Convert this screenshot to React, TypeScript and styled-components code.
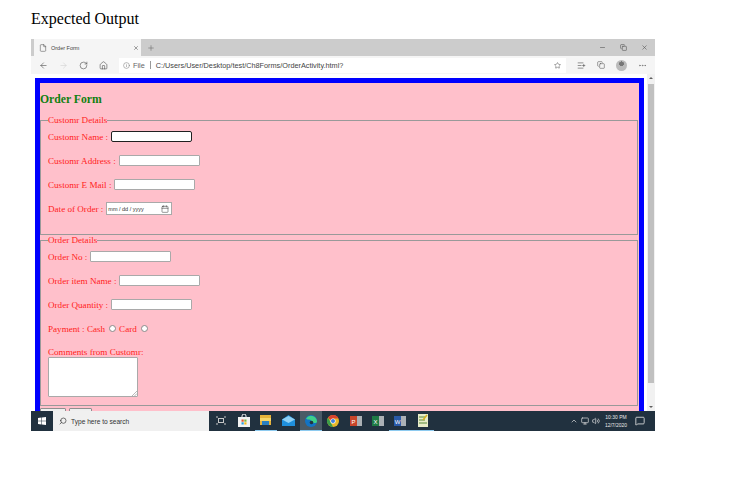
import React from 'react';
import styled, { createGlobalStyle } from 'styled-components';
import {
  ArrowLeft,
  ArrowRight,
  RotateCw,
  Home,
  Info,
  Star,
  ListPlus,
  Copy,
  MoreHorizontal,
  Minus,
  X,
  Plus,
  File,
  Search,
  Calendar,
  ChevronUp,
  MessageSquare,
  Monitor,
  Volume2,
} from 'lucide-react';

const GlobalStyle = createGlobalStyle`
  html, body {
    margin: 0;
    padding: 0;
    background: #ffffff;
  }
  body {
    width: 731px;
    height: 486px;
    overflow: hidden;
    font-family: "Liberation Serif", "Times New Roman", serif;
  }
`;

const Page = styled.div`
  padding: 9px 0 0 31px;
`;

const PageTitle = styled.div`
  height: 30px;
  line-height: 19px;
  font-size: 16px;
  color: #000000;
`;

const Shot = styled.div`
  width: 624px;
  height: 392px;
  display: flex;
  flex-direction: column;
  overflow: hidden;
  font-family: "Liberation Sans", Arial, sans-serif;
`;

const TabBar = styled.div`
  height: 17px;
  flex: none;
  display: flex;
  align-items: stretch;
  background: #cccccc;
`;

const Tab = styled.div`
  width: 107px;
  margin-left: 3px;
  display: flex;
  align-items: center;
  padding: 0 2px 0 5px;
  box-sizing: border-box;
  gap: 4px;
  background: #f5f5f5;
  font-size: 5.5px;
  color: #444444;
`;

const TabName = styled.span`
  flex: 1;
`;

const NewTab = styled.div`
  width: 20px;
  display: flex;
  align-items: center;
  justify-content: center;
  color: #777777;
`;

const WindowButtons = styled.div`
  margin-left: auto;
  display: flex;
  align-items: center;
  gap: 14px;
  padding-right: 7px;
  color: #555555;
`;

const Toolbar = styled.div`
  height: 18px;
  flex: none;
  display: flex;
  align-items: center;
  gap: 11px;
  padding: 0 8px 0 8px;
  background: #f5f5f5;
  color: #444444;
`;

const AddressBar = styled.div`
  flex: 1;
  height: 15px;
  display: flex;
  align-items: center;
  gap: 3px;
  padding: 0 5px 0 4px;
  background: #ffffff;
  font-size: 7.3px;
  color: #666666;
`;

const Divider = styled.span`
  width: 1px;
  height: 8px;
  background: #999999;
  margin: 0 2px;
`;

const Address = styled.span`
  flex: 1;
  color: #444444;
`;

const Avatar = styled.span`
  width: 11px;
  height: 11px;
  border-radius: 50%;
  background: radial-gradient(circle at 50% 35%, #777777 0 26%, #bbbbbb 28%);
`;

const Viewport = styled.div`
  flex: 1;
  min-height: 0;
  display: flex;
  overflow: hidden;
  background: #ffffff;
`;

const Content = styled.div`
  flex: 1;
  padding: 4px 3px 0 4px;
  overflow: hidden;
`;

const OrderBox = styled.div`
  border: 5px solid #0000ff;
  border-bottom: 0;
  background: #ffc0cb;
  height: 340px;
  color: #ff2020;
  font-family: "Liberation Serif", "Times New Roman", serif;
  font-size: 9.1px;
`;

const OrderTitle = styled.h2`
  margin: 0 0 7px;
  padding: 10px 0 0;
  height: 15px;
  line-height: 13px;
  font-size: 11.7px;
  font-weight: 700;
  color: #118011;
  box-sizing: content-box;
`;

const Fieldset = styled.fieldset<{ $height: number }>`
  margin: 0 1px 0 0;
  padding: 0 0 0 7px;
  height: ${(props) => props.$height}px;
  box-sizing: border-box;
  border: 1px solid #999999;
`;

const Legend = styled.legend`
  padding: 0;
  line-height: 11px;
  font-size: 9.1px;
`;

const FieldBody = styled.div`
  padding-top: 5px;
`;

const Row = styled.div`
  height: 24px;
  display: flex;
  align-items: flex-start;
  line-height: 12px;
  white-space: pre;
`;

const TextInput = styled.span<{ $focused?: boolean }>`
  display: inline-block;
  width: 81px;
  height: 11px;
  margin-left: 3px;
  box-sizing: border-box;
  background: #ffffff;
  border: 1px solid ${(props) => (props.$focused ? '#202020' : '#a9a9a9')};
  border-radius: ${(props) => (props.$focused ? '2px' : '1px')};
`;

const DateInput = styled.span`
  width: 66px;
  height: 13px;
  margin-left: 3px;
  margin-top: -1px;
  padding: 0 2px 0 1px;
  box-sizing: border-box;
  display: inline-flex;
  align-items: center;
  justify-content: space-between;
  background: #ffffff;
  border: 1px solid #a9a9a9;
  color: #333333;
  font-family: "Liberation Sans", Arial, sans-serif;
  font-size: 5.5px;
`;

const Radio = styled.span`
  width: 7px;
  height: 7px;
  margin: 2px 3px 0 4px;
  box-sizing: border-box;
  background: #ffffff;
  border: 1px solid #8a8a8a;
  border-radius: 50%;
`;

const CommentBlock = styled.div`
  line-height: 11px;
`;

const CommentArea = styled.div`
  position: relative;
  width: 90px;
  height: 40px;
  margin-top: -1px;
  box-sizing: border-box;
  background: #ffffff;
  border: 1px solid #a9a9a9;
  border-radius: 1px;
`;

const Grip = styled.svg`
  position: absolute;
  right: 0;
  bottom: 0;
`;

const ButtonRow = styled.div`
  display: flex;
  gap: 3px;
  margin-top: 2px;
`;

const FormButton = styled.span<{ $width: number }>`
  width: ${(props) => props.$width}px;
  height: 12px;
  box-sizing: border-box;
  display: inline-flex;
  align-items: center;
  justify-content: center;
  background: #efefef;
  border: 1px solid #8f8f8f;
  border-radius: 1px;
  font-family: "Liberation Sans", Arial, sans-serif;
  font-size: 6.5px;
  color: #222222;
`;

const Scrollbar = styled.div`
  width: 8px;
  flex: none;
  display: flex;
  flex-direction: column;
  align-items: center;
  background: #f1f1f1;
`;

const Thumb = styled.div`
  width: 6px;
  height: 299px;
  margin-top: 5px;
  background: #c0c0c0;
`;

const Arrow = styled.span<{ $down?: boolean }>`
  margin: ${(props) => (props.$down ? 'auto 0 3px' : '3px 0 0')};
  width: 0;
  height: 0;
  border-left: 2px solid transparent;
  border-right: 2px solid transparent;
  border-${(props) => (props.$down ? 'top' : 'bottom')}: 2px solid #606060;
`;

const Taskbar = styled.div`
  height: 20px;
  flex: none;
  display: flex;
  align-items: stretch;
  background: #21313f;
  color: #e6e6e6;
`;

const StartButton = styled.div`
  width: 22px;
  display: flex;
  align-items: center;
  justify-content: center;
`;

const SearchBox = styled.div`
  width: 156px;
  display: flex;
  align-items: center;
  gap: 4px;
  padding-left: 6px;
  box-sizing: border-box;
  background: #f0f0f0;
  color: #333333;
  font-size: 6.6px;
`;

const SearchGlyph = styled(Search)`
  transform: scaleX(-1);
`;

const TaskApps = styled.div`
  display: flex;
  margin-left: 1px;
`;

const TaskApp = styled.div<{ $active?: boolean; $open?: boolean }>`
  width: 22.4px;
  display: flex;
  align-items: center;
  justify-content: center;
  background: ${(props) => (props.$active ? '#4a5a66' : 'transparent')};
  border-bottom: 1px solid ${(props) => (props.$open ? '#8ecbf0' : 'transparent')};
  box-sizing: border-box;
`;

const Tray = styled.div`
  margin-left: auto;
  display: flex;
  align-items: center;
  gap: 3px;
  padding-right: 10px;
`;

const Clock = styled.div`
  width: 24px;
  margin: 0 4px 0 1px;
  text-align: center;
  white-space: nowrap;
  font-size: 5px;
  line-height: 8px;
  color: #e8e8e8;
`;

const WinLogo = () => (
  <svg width="8" height="8" viewBox="0 0 8 8">
    <path fill="#ffffff" d="M0 1l3.4-.5v3.2H0zM3.9.4L8 0v3.7H3.9zM0 4.2h3.4v3.3L0 7zM3.9 4.2H8V8l-4.1-.6z" />
  </svg>
);

const TaskView = () => (
  <svg width="10" height="9" viewBox="0 0 10 9" fill="none" stroke="#c8c8c8">
    <rect x="2.5" y="2.5" width="5" height="4" />
    <path d="M0 1h2M8 1h2M0 8h2M8 8h2" />
  </svg>
);

const StoreIcon = () => (
  <svg width="12" height="13" viewBox="0 0 12 13">
    <path fill="none" stroke="#f0f0f0" d="M4 3.5V2a2 2 0 014 0v1.5" />
    <rect y="3" width="12" height="10" fill="#f2f2f2" />
    <rect x="3.5" y="5.5" width="2.2" height="2.2" fill="#e8532b" />
    <rect x="6.3" y="5.5" width="2.2" height="2.2" fill="#7cb83a" />
    <rect x="3.5" y="8.3" width="2.2" height="2.2" fill="#2a9fe0" />
    <rect x="6.3" y="8.3" width="2.2" height="2.2" fill="#f5bb1e" />
  </svg>
);

const FolderIcon = () => (
  <svg width="12" height="11" viewBox="0 0 12 11">
    <rect y="0" width="11" height="10" fill="#e6b23a" />
    <rect y="3" width="11" height="3" fill="#f6d568" />
    <rect x="2" y="6" width="7" height="4" fill="#2a7fc0" />
  </svg>
);

const MailIcon = () => (
  <svg width="13" height="11" viewBox="0 0 13 11">
    <path fill="#1f8fdc" d="M0 4.5L6.5 0 13 4.5V11H0z" />
    <path fill="#8fd0f5" d="M0 4.5l6.5 3.5L13 4.5 6.5 1z" />
  </svg>
);

const EdgeIcon = () => (
  <svg width="12" height="12" viewBox="0 0 12 12">
    <circle cx="6" cy="6" r="6" fill="#1273c4" />
    <path fill="#3fd08a" d="M1 3.5A6 6 0 0112 6.5c0 1-1 1.5-2.5 1.5H6c1-2 0-3.500-2-3.500S1.500 4 1 3.500z" />
    <circle cx="6.5" cy="7.5" r="1.8" fill="#21313f" />
  </svg>
);

const ChromeIcon = () => (
  <svg width="12" height="12" viewBox="0 0 12 12">
    <circle cx="6" cy="6" r="6" fill="#e8b82a" />
    <path fill="#d9432f" d="M1 2.7A6 6 0 0111.5 3.5H6A2.5 2.5 0 003.6 5.2z" />
    <path fill="#3a9d4a" d="M1 2.7L3.7 7.2 6 12A6 6 0 011 2.7z" />
    <circle cx="6" cy="6" r="2.6" fill="#ffffff" />
    <circle cx="6" cy="6" r="2" fill="#3f7fe0" />
  </svg>
);

const OfficeIcon = ({ color, letter }: { color: string; letter: string }) => (
  <svg width="12" height="12" viewBox="0 0 12 12">
    <rect x="4" y="1" width="8" height="10" fill="#e8e8e8" opacity="0.7" />
    <rect y="1" width="7" height="10" fill={color} />
    <text x="3.5" y="8.5" textAnchor="middle" fontSize="6" fontFamily="Liberation Sans" fill="#ffffff">
      {letter}
    </text>
  </svg>
);

const NotepadIcon = () => (
  <svg width="10" height="13" viewBox="0 0 10 13">
    <rect width="10" height="13" fill="#e8ecc8" />
    <path stroke="#5b8a3a" strokeWidth="1" d="M1 3h6M1 6h6M1 9h8" />
    <path stroke="#d8b020" strokeWidth="1.5" d="M9 1L5 6" />
  </svg>
);

const customerRows = ['Customr Address :', 'Customr E Mail :'];

const orderRows = ['Order No :', 'Order item Name :', 'Order Quantity :'];

const App: React.FC = () => {
  return (
    <Page>
      <GlobalStyle />
      <PageTitle>Expected Output</PageTitle>
      <Shot>
        <TabBar>
          <Tab>
            <File size={8} strokeWidth={1.5} />
            <TabName>Order Form</TabName>
            <X size={6} />
          </Tab>
          <NewTab>
            <Plus size={8} />
          </NewTab>
          <WindowButtons>
            <Minus size={7} />
            <Copy size={7} />
            <X size={7} />
          </WindowButtons>
        </TabBar>
        <Toolbar>
          <ArrowLeft size={9} strokeWidth={1.5} />
          <ArrowRight size={9} strokeWidth={1.5} color="#cfcfcf" />
          <RotateCw size={9} strokeWidth={1.5} />
          <Home size={9} strokeWidth={1.5} />
          <AddressBar>
            <Info size={7} color="#888888" />
            File
            <Divider />
            <Address>C:/Users/User/Desktop/test/Ch8Forms/OrderActivity.html?</Address>
            <Star size={7} />
          </AddressBar>
          <ListPlus size={9} strokeWidth={1.5} />
          <Copy size={8} strokeWidth={1.5} />
          <Avatar />
          <MoreHorizontal size={9} color="#777777" />
        </Toolbar>
        <Viewport>
          <Content>
            <OrderBox>
              <OrderTitle>Order Form</OrderTitle>
              <Fieldset $height={120}>
                <Legend>Customr Details</Legend>
                <FieldBody>
                  <Row>
                    Customr Name :
                    <TextInput $focused />
                  </Row>
                  {customerRows.map((label) => (
                    <Row key={label}>
                      {label}
                      <TextInput />
                    </Row>
                  ))}
                  <Row>
                    Date of Order :
                    <DateInput>
                      mm / dd / yyyy
                      <Calendar size={8} strokeWidth={1.5} />
                    </DateInput>
                  </Row>
                </FieldBody>
              </Fieldset>
              <Fieldset $height={171}>
                <Legend>Order Details</Legend>
                <FieldBody>
                  {orderRows.map((label) => (
                    <Row key={label}>
                      {label}
                      <TextInput />
                    </Row>
                  ))}
                  <Row>
                    Payment : Cash
                    <Radio />
                    Card
                    <Radio />
                  </Row>
                  <CommentBlock>
                    Comments from Customr:
                    <CommentArea>
                      <Grip width="5" height="5" viewBox="0 0 5 5" stroke="#888888" strokeWidth="0.6">
                        <path d="M0 5L5 0M2.5 5L5 2.5" />
                      </Grip>
                    </CommentArea>
                  </CommentBlock>
                </FieldBody>
              </Fieldset>
              <ButtonRow>
                <FormButton $width={26}>Submit</FormButton>
                <FormButton $width={23}>Reset</FormButton>
              </ButtonRow>
            </OrderBox>
          </Content>
          <Scrollbar>
            <Arrow />
            <Thumb />
            <Arrow $down />
          </Scrollbar>
        </Viewport>
        <Taskbar>
          <StartButton>
            <WinLogo />
          </StartButton>
          <SearchBox>
            <SearchGlyph size={8} />
            Type here to search
          </SearchBox>
          <TaskApps>
            <TaskApp><TaskView /></TaskApp>
            <TaskApp><StoreIcon /></TaskApp>
            <TaskApp $open><FolderIcon /></TaskApp>
            <TaskApp><MailIcon /></TaskApp>
            <TaskApp $active $open><EdgeIcon /></TaskApp>
            <TaskApp><ChromeIcon /></TaskApp>
            <TaskApp><OfficeIcon color="#c8452a" letter="P" /></TaskApp>
            <TaskApp><OfficeIcon color="#1f7a45" letter="X" /></TaskApp>
            <TaskApp $open><OfficeIcon color="#2a5aa8" letter="W" /></TaskApp>
            <TaskApp $open><NotepadIcon /></TaskApp>
          </TaskApps>
          <Tray>
            <ChevronUp size={8} />
            <Monitor size={8} />
            <Volume2 size={8} />
            <Clock>
              10:30 PM
              <br />
              12/7/2020
            </Clock>
            <MessageSquare size={10} />
          </Tray>
        </Taskbar>
      </Shot>
    </Page>
  );
};

export default App;
